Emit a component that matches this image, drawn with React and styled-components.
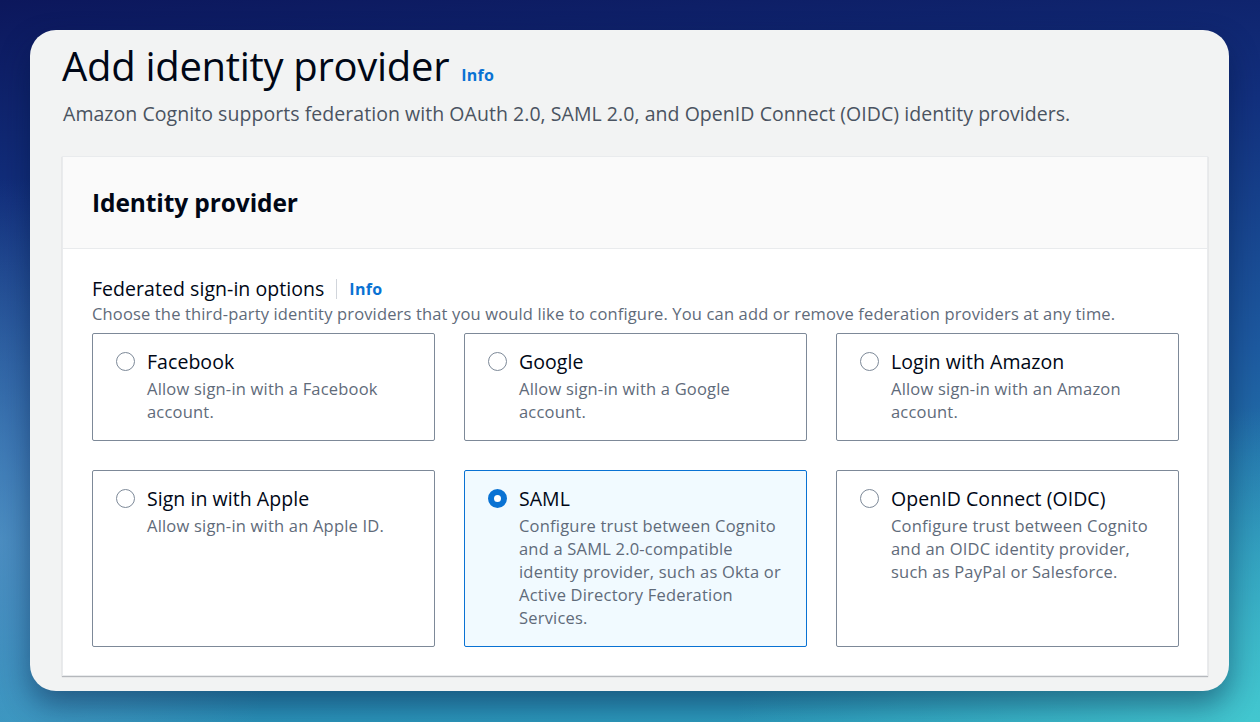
import React from 'react';
import styled, { createGlobalStyle } from 'styled-components';

const OPTIONS = [
  { id: 'facebook', label: 'Facebook', desc: 'Allow sign-in with a Facebook account.' },
  { id: 'google', label: 'Google', desc: 'Allow sign-in with a Google account.' },
  { id: 'amazon', label: 'Login with Amazon', desc: 'Allow sign-in with an Amazon account.' },
  { id: 'apple', label: 'Sign in with Apple', desc: 'Allow sign-in with an Apple ID.' },
  {
    id: 'saml',
    label: 'SAML',
    desc: 'Configure trust between Cognito and a SAML 2.0-compatible identity provider, such as Okta or Active Directory Federation Services.',
  },
  {
    id: 'oidc',
    label: 'OpenID Connect (OIDC)',
    desc: 'Configure trust between Cognito and an OIDC identity provider, such as PayPal or Salesforce.',
  },
];

const GlobalStyle = createGlobalStyle`
  html, body {
    margin: 0;
    padding: 0;
  }
  body {
    font-family: "Open Sans", "Noto Sans", sans-serif;
  }
`;

const Backdrop = styled.div`
  width: 1260px;
  height: 722px;
  box-sizing: border-box;
  padding: 30px 31px 31px 30px;
  background:
    radial-gradient(ellipse 420px 520px at 0% 75%, rgba(110, 170, 215, 0.55), transparent 70%),
    radial-gradient(ellipse 700px 420px at 100% 100%, rgba(70, 205, 210, 0.85), transparent 75%),
    linear-gradient(175deg, #0c175c 0%, #12307e 25%, #1d5aa0 55%, #2785b4 80%, #2fa4c0 100%);
  overflow: hidden;
`;

const Card = styled.div`
  height: 100%;
  box-sizing: border-box;
  background: #f2f3f3;
  border-radius: 26px;
  box-shadow: 0 14px 30px rgba(5, 20, 60, 0.45);
  padding: 12px 21px 0 32px;
  overflow: hidden;
`;

const TitleRow = styled.div`
  display: flex;
  align-items: baseline;
  gap: 12px;
`;

const Title = styled.h1`
  margin: 0;
  font-size: 40px;
  font-weight: 400;
  letter-spacing: -0.3px;
  color: #000716;
  line-height: 48px;
`;

const InfoLink = styled.a`
  color: #0972d3;
  font-weight: 700;
  font-size: 16px;
  letter-spacing: 0.3px;
  text-decoration: none;
`;

const Subtitle = styled.p`
  margin: 12px 0 0 1px;
  font-size: 19.5px;
  color: #4a5361;
  line-height: 24px;
  letter-spacing: 0.05px;
`;

const Panel = styled.section`
  margin-top: 30px;
  background: #ffffff;
  border: 1px solid #e9ebed;
  box-shadow: 0 1px 1px rgba(0, 7, 22, 0.25);
  overflow: hidden;
`;

const PanelHeader = styled.header`
  background: #fafafa;
  border-bottom: 1px solid #e9ebed;
  height: 92px;
  box-sizing: border-box;
  display: flex;
  align-items: center;
  padding: 0 29px;
`;

const PanelTitle = styled.h2`
  margin: 0;
  font-size: 24.5px;
  font-weight: 700;
  color: #000716;
  letter-spacing: -0.1px;
`;

const PanelBody = styled.div`
  padding: 27px 29px 28px;
`;

const FieldLabel = styled.div`
  display: flex;
  align-items: center;
  font-size: 19.5px;
  color: #000716;
  line-height: 26px;
  letter-spacing: 0.05px;
`;

const Divider = styled.span`
  width: 1px;
  height: 20px;
  background: #d1d5db;
  margin: 0 12px;
`;

const FieldDesc = styled.div`
  font-size: 16.5px;
  color: #5f6b7a;
  line-height: 22px;
  margin-top: 1px;
  letter-spacing: 0.15px;
`;

const Grid = styled.div`
  margin-top: 8px;
  display: grid;
  grid-template-columns: repeat(3, 343px);
  grid-template-rows: 108px 177px;
  column-gap: 29px;
  row-gap: 29px;
`;

const Tile = styled.label`
  display: flex;
  gap: 12px;
  box-sizing: border-box;
  padding: 17px 20px 0 23px;
  border: 1px solid ${p => (p.selected ? '#0972d3' : '#7d8998')};
  background: ${p => (p.selected ? '#f1faff' : '#ffffff')};
  border-radius: 2px;
  cursor: pointer;
`;

const Radio = styled.span`
  flex: none;
  width: 19px;
  height: 19px;
  margin-top: 1px;
  box-sizing: border-box;
  border-radius: 50%;
  border: ${p => (p.checked ? '6px solid #0972d3' : '1.5px solid #7d8998')};
  background: #ffffff;
`;

const TileText = styled.div`
  display: flex;
  flex-direction: column;
`;

const TileLabel = styled.span`
  font-size: 19.5px;
  color: #000716;
  line-height: 22px;
  letter-spacing: 0.05px;
`;

const TileDesc = styled.span`
  margin-top: 4px;
  font-size: 16.5px;
  color: #5f6b7a;
  line-height: 23px;
  letter-spacing: 0.2px;
`;

const App = () => {
  const selected = 'saml';
  return (
    <>
      <GlobalStyle />
      <Backdrop>
        <Card>
          <TitleRow>
            <Title>Add identity provider</Title>
            <InfoLink href="#">Info</InfoLink>
          </TitleRow>
          <Subtitle>
            Amazon Cognito supports federation with OAuth 2.0, SAML 2.0, and OpenID Connect (OIDC) identity providers.
          </Subtitle>
          <Panel>
            <PanelHeader>
              <PanelTitle>Identity provider</PanelTitle>
            </PanelHeader>
            <PanelBody>
              <FieldLabel>
                Federated sign-in options
                <Divider />
                <InfoLink href="#">Info</InfoLink>
              </FieldLabel>
              <FieldDesc>
                Choose the third-party identity providers that you would like to configure. You can add or remove federation providers at any time.
              </FieldDesc>
              <Grid>
                {OPTIONS.map(opt => (
                  <Tile key={opt.id} selected={opt.id === selected}>
                    <Radio checked={opt.id === selected} />
                    <TileText>
                      <TileLabel>{opt.label}</TileLabel>
                      <TileDesc>{opt.desc}</TileDesc>
                    </TileText>
                  </Tile>
                ))}
              </Grid>
            </PanelBody>
          </Panel>
        </Card>
      </Backdrop>
    </>
  );
};

export default App;
